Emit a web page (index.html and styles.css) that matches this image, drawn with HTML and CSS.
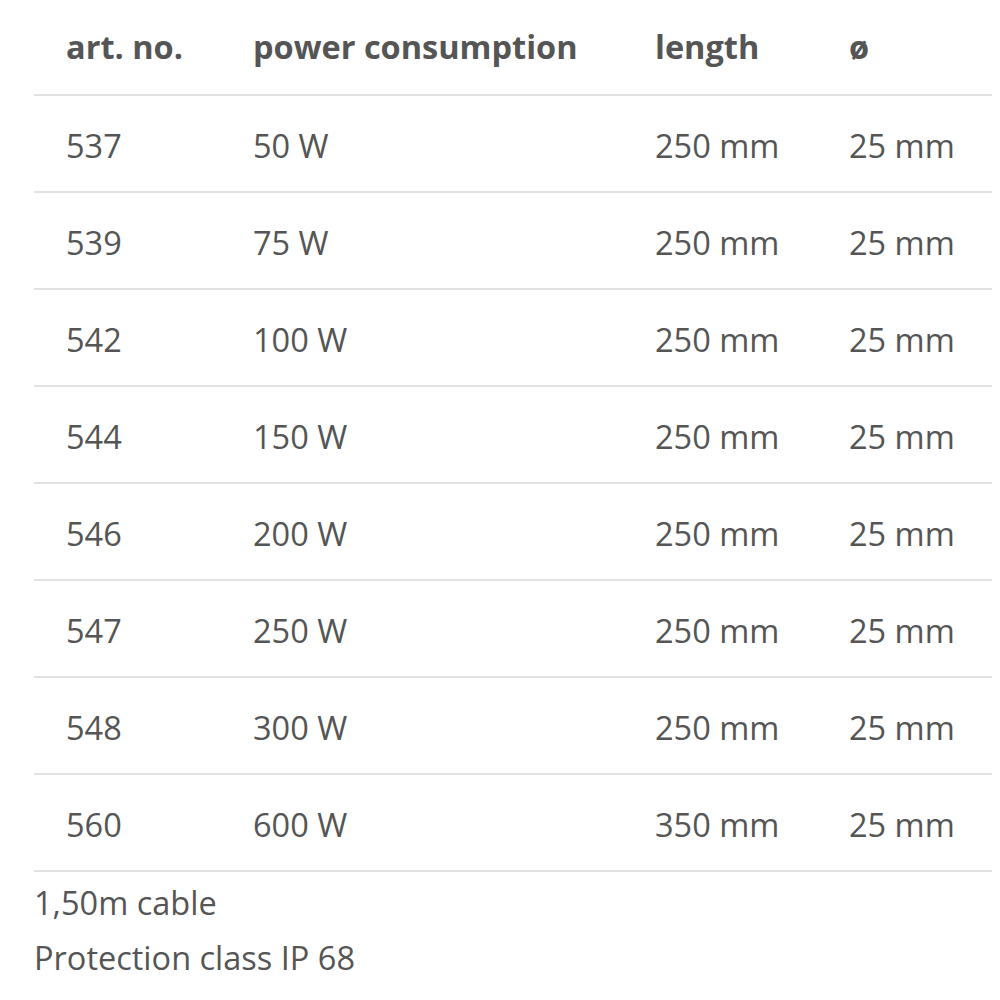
FILE: index.html
```html
<!DOCTYPE html>
<html>
<head>
<meta charset="utf-8">
<link rel="stylesheet" href="styles.css">
</head>
<body>
<div class="wrap">
  <table class="spec">
    <colgroup>
      <col class="c1"><col class="c2"><col class="c3"><col class="c4">
    </colgroup>
    <thead>
      <tr><th>art. no.</th><th>power consumption</th><th>length</th><th>ø</th></tr>
    </thead>
    <tbody>
      <tr><td>537</td><td>50 W</td><td>250 mm</td><td>25 mm</td></tr>
      <tr><td>539</td><td>75 W</td><td>250 mm</td><td>25 mm</td></tr>
      <tr><td>542</td><td>100 W</td><td>250 mm</td><td>25 mm</td></tr>
      <tr><td>544</td><td>150 W</td><td>250 mm</td><td>25 mm</td></tr>
      <tr><td>546</td><td>200 W</td><td>250 mm</td><td>25 mm</td></tr>
      <tr><td>547</td><td>250 W</td><td>250 mm</td><td>25 mm</td></tr>
      <tr><td>548</td><td>300 W</td><td>250 mm</td><td>25 mm</td></tr>
      <tr><td>560</td><td>600 W</td><td>350 mm</td><td>25 mm</td></tr>
    </tbody>
  </table>
  <div class="notes">
    <p>1,50m cable</p>
    <p>Protection class IP 68</p>
  </div>
</div>
</body>
</html>
```

FILE: styles.css
```css
html, body {
  margin: 0;
  padding: 0;
  background: #fff;
}
body {
  font-family: "Open Sans", "Liberation Sans", sans-serif;
  color: #555;
  font-size: 32.5px;
}
.wrap {
  padding: 0 8px 0 34px;
}
.spec {
  width: 958px;
  border-collapse: collapse;
  table-layout: fixed;
}
.c1 { width: 186px; }
.c2 { width: 402px; }
.c3 { width: 194px; }
.c4 { width: 176px; }
.spec th, .spec td {
  text-align: left;
  padding: 0 0 0 32px;
  border-bottom: 2px solid #e2e2e2;
  white-space: nowrap;
  line-height: 40px;
}
.spec th + th, .spec td + td {
  padding-left: 33px;
}
.spec th {
  font-weight: 700;
  height: 94px;
}
.spec td {
  font-weight: 400;
  height: 91px;
  padding-top: 4px;
}
.notes {
  padding-top: 3px;
}
.notes p {
  margin: 0;
  line-height: 55px;
}
```
